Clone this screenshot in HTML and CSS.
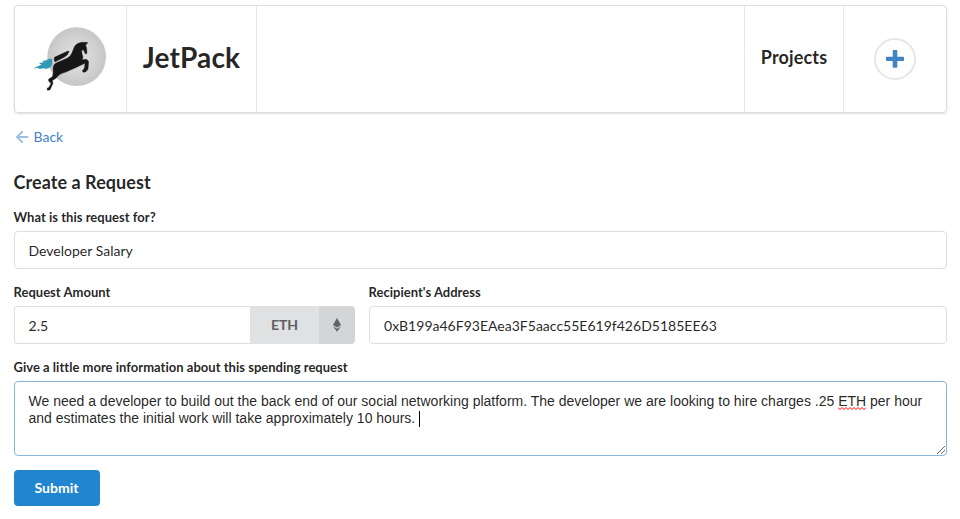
FILE: index.html
```html
<!DOCTYPE html>
<html lang="en">
<head>
<meta charset="utf-8">
<title>JetPack</title>
<link rel="stylesheet" href="styles.css">
</head>
<body>
<nav class="menu">
  <a class="item logo">
    <svg width="84" height="80" viewBox="0 0 252 240">
      <defs><radialGradient id="disc"><stop offset="0" stop-color="#e2e2e2"/><stop offset=".65" stop-color="#d2d2d2"/><stop offset="1" stop-color="#c6c6c6"/></radialGradient></defs>
      <circle cx="146" cy="110" r="88" fill="url(#disc)"/>
      <path fill="#3299b5" d="M72 116L54 117L61 120L42 123L48 127L33 129L40 134L16 145L35 144L30 148L52 144L48 148L62 145L70 139L73 130Z"/>
      <path fill="#171717" stroke="#171717" stroke-width="2" stroke-linejoin="round" d="M80 112L119 94Q125 92 122 97Q118 107 109 111L81 125Q77 119 80 112Z"/>
      <path fill="#171717" stroke="#171717" stroke-width="1" stroke-linejoin="round" d="M180 68L174 67L161 67Q145 69 139 80L132 98Q128 109 117 115L89 127Q75 131 75 147L76 157L73 170L62 177Q59 181 65 187L69 190L63 202L57 205L58 211L66 210L75 190L73 182L85 174Q94 161 112 157L143 143L171 130L169 145L163 152L165 157L173 156L180 148L182 125Q179 118 172 118L163 119Q167 110 162 101L161 92L166 89L172 102L177 100L176 85L173 75Z"/>
    </svg>
  </a>
  <a class="item brand">JetPack</a>
  <div class="spacer"></div>
  <a class="item projects">Projects</a>
  <a class="item add">
    <span class="ring"><svg width="20" height="20" viewBox="0 0 20 20"><path fill="#4183c4" d="M8.500 1h3q.8 0 .8.8v5.900h5.900q.8 0 .8.8v2.800q0 .8-.8.8h-5.900v5.900q0 .8-.8.8h-3q-.8 0-.8-.8v-5.900H1.800q-.8 0-.8-.8V8.500q0-.8.8-.8h5.900V1.800q0-.8.8-.8Z"/></svg></span>
  </a>
</nav>

<a class="back"><svg width="14" height="14" viewBox="0 0 14 14"><path fill="none" stroke="#4183c4" stroke-width="2" stroke-linecap="round" stroke-linejoin="round" d="M7 2L2 7L7 12M2.500 7H12.500"/></svg><span>Back</span></a>

<h3>Create a Request</h3>

<form>
  <div class="field">
    <label>What is this request for?</label>
    <div class="input">Developer Salary</div>
  </div>
  <div class="row">
    <div class="field amount">
      <label>Request Amount</label>
      <div class="group">
        <div class="input">2.5</div>
        <div class="unit">ETH</div>
        <div class="unit-icon"><svg width="8" height="14" viewBox="0 0 8 14"><path fill="#626364" d="M4 0L8 7L4 9.400L0 7ZM0 8.300L4 10.700L8 8.300L4 13.800Z"/></svg></div>
      </div>
    </div>
    <div class="field address">
      <label>Recipient's Address</label>
      <div class="input">0xB199a46F93EAea3F5aacc55E619f426D5185EE63</div>
    </div>
  </div>
  <div class="field">
    <label>Give a little more information about this spending request</label>
    <div class="textarea">We need a developer to build out the back end of our social networking platform. The developer we are looking to hire charges .25 <span class="misspelt">ETH<svg width="28" height="3" viewBox="0 0 28 3"><path fill="none" stroke="#f00" d="M0 .5l2 2l2-2l2 2l2-2l2 2l2-2l2 2l2-2l2 2l2-2l2 2l2-2l2 2l2-2"/></svg></span> per hour<br>and estimates the initial work will take approximately 10 hours. <span class="caret"></span>
      <svg class="grip" width="10" height="10" viewBox="0 0 10 10"><path fill="none" stroke="#666" d="M1 9L9 1M5 9L9 5"/></svg>
    </div>
  </div>
  <button class="submit" type="button">Submit</button>
</form>
</body>
</html>
```

FILE: styles.css
```css
* { box-sizing: border-box; }
body {
  margin: 0;
  padding: 5px 13px 0 14px;
  background: #fff;
  color: rgba(0, 0, 0, .87);
  font: 14px/20px Lato, "Liberation Sans", sans-serif;
}
.menu {
  display: flex;
  height: 108px;
  border: 1px solid #dcdddd;
  border-radius: 4px;
  box-shadow: 0 1px 2px rgba(34, 36, 38, .15);
}
.item { display: flex; align-items: center; justify-content: center; font-weight: 700; }
.logo { width: 112px; border-right: 1px solid #e8e8e9; }
.logo svg { margin-left: -2px; margin-top: 2px; }
.brand { width: 130px; border-right: 1px solid #e8e8e9; font-size: 28px; letter-spacing: .15px; padding-bottom: 4px; }
.spacer { flex: 1; }
.projects { width: 100px; border-left: 1px solid #e8e8e9; border-right: 1px solid #e8e8e9; font-size: 18px; letter-spacing: .15px; padding-bottom: 4px; }
.add { width: 102px; }
.ring {
  display: flex;
  align-items: center;
  justify-content: center;
  width: 42px;
  height: 42px;
  border: 2px solid #e6e6e6;
  border-radius: 50%;
}
.back { display: flex; align-items: center; gap: 4.5px; margin-top: 14px; color: #4183c4; }
.back svg { opacity: .5; margin-left: 1px; }
h3 { margin: 23px 0 14px -.5px; font-size: 18px; line-height: 24px; font-weight: 700; letter-spacing: .06px; }
.field { margin-bottom: 14px; }
label { display: block; margin: 0 0 4px -.5px; font-size: 13px; line-height: 19px; font-weight: 700; letter-spacing: .02px; }
.input {
  height: 38px;
  padding: 9px 13.5px;
  border: 1px solid #dededf;
  border-radius: 4px;
  line-height: 20px;
  letter-spacing: .01px;
}
.row { display: flex; gap: 14px; }
.amount { width: 341px; }
.address { flex: 1; }
.address .input { padding-left: 14px; }
.group { display: flex; }
.group .input { flex: 1; border-right: 0; border-radius: 4px 0 0 4px; }
.unit, .unit-icon { display: flex; align-items: center; justify-content: center; height: 38px; }
.unit { width: 69px; background: #e0e1e2; color: #5f6061; font-weight: 700; padding-bottom: 1px; }
.unit-icon { width: 36px; background: #d4d5d6; border-radius: 0 4px 4px 0; }
.textarea {
  position: relative;
  height: 75px;
  padding: 11px 13.5px;
  border: 1px solid #85b7d9;
  border-radius: 4px;
  font: 14px/17px "Liberation Sans", sans-serif;
  white-space: nowrap;
}
.misspelt { position: relative; }
.misspelt svg { position: absolute; left: 0; bottom: -1px; }
.caret { display: inline-block; width: 1px; height: 16px; background: #000; vertical-align: -4px; }
.grip { position: absolute; right: 0; bottom: 0; }
.submit {
  display: block;
  width: 86px;
  height: 36px;
  padding: 0 1px 0 0;
  border: 0;
  border-radius: 4px;
  background: #2185d0;
  color: #fff;
  font: 700 14px/20px Lato, sans-serif;
}
```
